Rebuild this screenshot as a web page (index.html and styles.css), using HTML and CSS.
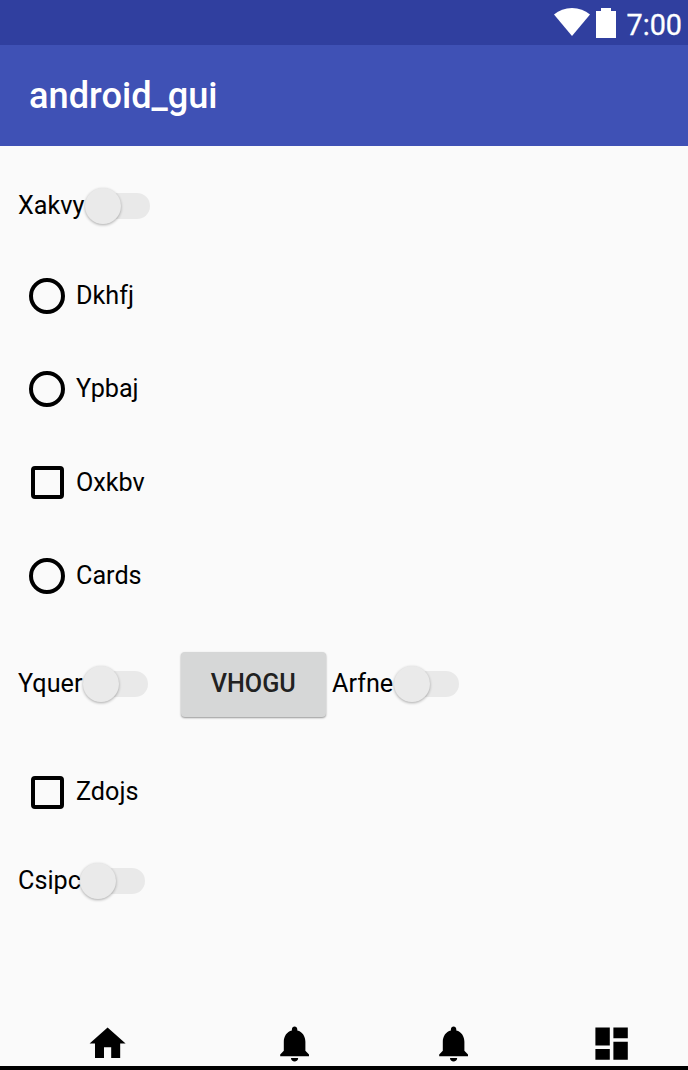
FILE: index.html
```html
<!DOCTYPE html>
<html lang="en">
<head>
<meta charset="utf-8">
<title>android_gui</title>
<link rel="stylesheet" href="styles.css">
</head>
<body>
<div class="screen">
  <div class="status">
    <svg class="wifi" viewBox="0 0 36 28"><path d="M0 6.5C5 2.3 11 0 18 0s13 2.3 18 6.5L18 28z"/></svg>
    <svg class="battery" viewBox="0 0 20 30"><path d="M0 3h5V0h10v3h5v27H0z"/></svg>
    <span class="clock">7:00</span>
  </div>
  <header class="appbar"><h1 class="title">android_gui</h1></header>
  <main class="content">
    <div class="row row-switch"><label class="switch"><span class="label">Xakvy</span><span class="track"></span></label></div>
    <label class="row option"><span class="radio"></span><span class="label">Dkhfj</span></label>
    <label class="row option"><span class="radio"></span><span class="label">Ypbaj</span></label>
    <label class="row option"><span class="check"></span><span class="label">Oxkbv</span></label>
    <label class="row option"><span class="radio"></span><span class="label">Cards</span></label>
    <div class="row row-mixed">
      <label class="switch first"><span class="label">Yquer</span><span class="track"></span></label>
      <button class="button">VHOGU</button>
      <label class="switch"><span class="label">Arfne</span><span class="track"></span></label>
    </div>
    <label class="row option"><span class="check"></span><span class="label">Zdojs</span></label>
    <div class="row row-switch row-last"><label class="switch"><span class="label">Csipc</span><span class="track"></span></label></div>
  </main>
  <nav class="tabs">
    <svg class="icon" viewBox="0 0 24 24"><path d="M10 20v-6h4v6h5v-8h3L12 3 2 12h3v8z"/></svg>
    <svg class="icon" viewBox="0 0 24 24"><path d="M12 22c1.1 0 2-.9 2-2h-4c0 1.1.89 2 2 2zm6-6v-5c0-3.07-1.64-5.64-4.5-6.32V4c0-.83-.67-1.5-1.5-1.5s-1.5.67-1.5 1.5v.68C7.63 5.36 6 7.92 6 11v5l-2 2v1h16v-1l-2-2z"/></svg>
    <svg class="icon" viewBox="0 0 24 24"><path d="M12 22c1.1 0 2-.9 2-2h-4c0 1.1.89 2 2 2zm6-6v-5c0-3.07-1.64-5.64-4.5-6.32V4c0-.83-.67-1.5-1.5-1.5s-1.5.67-1.5 1.5v.68C7.63 5.36 6 7.92 6 11v5l-2 2v1h16v-1l-2-2z"/></svg>
    <svg class="icon last" viewBox="0 0 24 24"><path d="M3 13h8V3H3v10zm0 8h8v-6H3v6zm10 0h8V11h-8v10zm0-18v6h8V3h-8z"/></svg>
  </nav>
  <div class="bottom"></div>
</div>
</body>
</html>
```
FILE: styles.css
```css
* { box-sizing: border-box; }
body { margin: 0; font-family: Roboto, sans-serif; }
.screen {
  width: 688px;
  height: 1070px;
  display: flex;
  flex-direction: column;
  background: #fafafa;
  overflow: hidden;
}
.status {
  height: 45px;
  flex: none;
  display: flex;
  align-items: flex-start;
  justify-content: flex-end;
  padding: 8px 6px 0 0;
  background: #303f9f;
  color: #fff;
}
.status svg { fill: #fff; flex: none; }
.wifi { width: 36px; height: 28px; margin-right: 6px; }
.battery { width: 20px; height: 30px; margin-right: 10px; }
.clock { font-size: 28.8px; line-height: 34px; font-weight: 400; -webkit-text-stroke: .3px #fff; }
.appbar {
  height: 101px;
  flex: none;
  display: flex;
  align-items: center;
  padding-left: 29px;
  background: #3f51b5;
}
.title { margin: 0; font-size: 36.2px; line-height: 42px; font-weight: 500; color: #fff; }
.content { flex: 1; min-height: 0; padding-top: 17px; }
.row { display: flex; align-items: center; }
.row-switch { height: 86px; padding-left: 18px; }
.row-last { height: 84px; }
.row-mixed { height: 122.5px; padding-left: 18px; }
.option { height: 93.5px; padding-left: 29px; }
.label { font-size: 25.2px; line-height: 30px; color: #000; padding-bottom: 1px; }
.option .label { padding-bottom: 0; }
.radio { width: 36px; height: 36px; border: 4px solid #000; border-radius: 50%; margin-right: 11px; }
.check { width: 33px; height: 33px; border: 4px solid #000; border-radius: 4px; margin: 0 12.5px 0 1.5px; }
.switch { display: flex; align-items: center; }
.first { width: 162.5px; }
.track {
  width: 60px;
  height: 26px;
  margin-left: 5.5px;
  border-radius: 13px;
  background: #e9e9e9;
  display: flex;
  align-items: center;
}
.track::before {
  content: "";
  width: 36px;
  height: 36px;
  flex: none;
  margin-left: -5px;
  border-radius: 50%;
  background: #eaeaea;
  box-shadow: 0 1px 3px rgba(0, 0, 0, .32);
}
.first .track { margin-left: 6px; }
.row-last .track { margin-left: 4px; }
.button {
  width: 145.5px;
  height: 65px;
  margin: 0 6px 0 0;
  padding: 0 0 2px;
  border: 0;
  border-radius: 4px;
  background: #d6d7d7;
  box-shadow: 0 1px 2px rgba(0, 0, 0, .4);
  font: 500 25.2px Roboto, sans-serif;
  color: #212121;
}
.tabs {
  height: 43px;
  flex: none;
  display: grid;
  grid-template-columns: 216px 158px 158.5px 1fr;
  justify-items: center;
}
.icon { width: 43.2px; height: 43.2px; fill: #000; margin-top: -.5px; }
.last { margin-left: 3px; }
.bottom { height: 4.5px; flex: none; background: #000; }
```
